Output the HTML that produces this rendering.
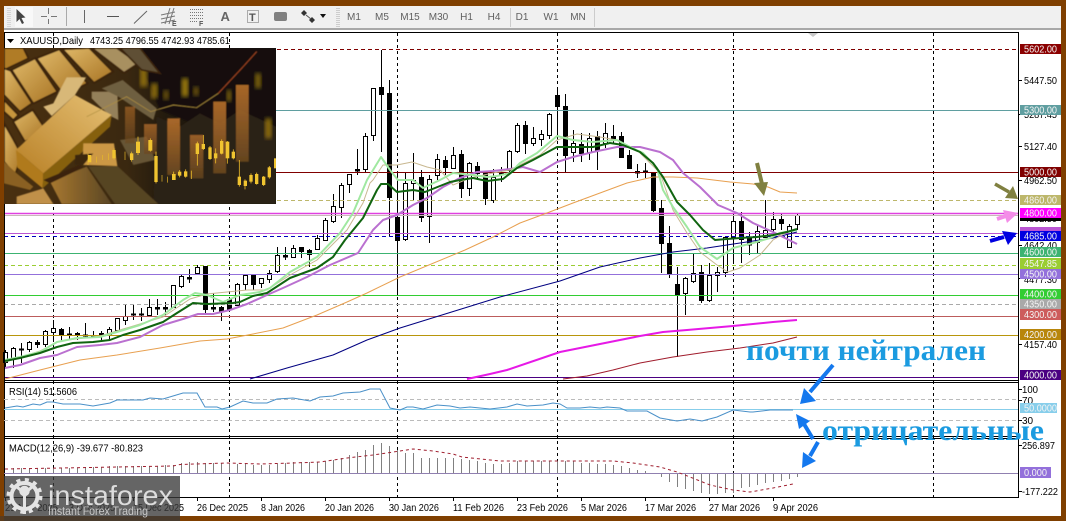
<!DOCTYPE html>
<html><head><meta charset="utf-8"><title>XAUUSD,Daily</title>
<style>
html,body{margin:0;padding:0;background:#7f3f00;}
svg{display:block;position:absolute;left:0;top:0;}
text{font-family:"Liberation Sans",sans-serif;}
</style></head><body>
<svg width="1066" height="521" viewBox="0 0 1066 521" xmlns="http://www.w3.org/2000/svg">
<defs>
<clipPath id="ic"><rect x="12" y="24" width="816" height="468"/></clipPath>
<linearGradient id="bg" x1="0" x2="1" y1="0" y2="0"><stop offset="0" stop-color="#4a3010"/><stop offset=".45" stop-color="#3a2810"/><stop offset=".6" stop-color="#221a0e"/><stop offset="1" stop-color="#120e08"/></linearGradient>
<linearGradient id="g1" x1="0" x2="1" y1="0" y2="1"><stop offset="0" stop-color="#dfb868"/><stop offset="1" stop-color="#a87424"/></linearGradient>
<linearGradient id="g2" x1="0" x2="1" y1="1" y2="0"><stop offset="0" stop-color="#b88026"/><stop offset="1" stop-color="#e6c074"/></linearGradient>
<linearGradient id="g3" x1="0" x2="1" y1="0" y2="0"><stop offset="0" stop-color="#a87830"/><stop offset="1" stop-color="#5a4624"/></linearGradient>
<linearGradient id="or" x1="0" x2="0" y1="0" y2="1"><stop offset="0" stop-color="#b8702c"/><stop offset="1" stop-color="#6a4820"/></linearGradient>
<filter id="b1"><feGaussianBlur stdDeviation="1.5"/></filter>
<filter id="b2"><feGaussianBlur stdDeviation="6"/></filter>
</defs>
<!-- frame -->
<rect width="1066" height="521" fill="#7f3f00"/>
<rect x="4" y="6" width="1057" height="24" fill="#f0f0f0"/>
<rect x="4" y="28" width="1057" height="2" fill="#a8a8a8"/>
<rect x="4" y="30" width="1057" height="486" fill="#fff"/>
<rect x="4.5" y="32.5" width="1014" height="465" fill="#fff" stroke="#000"/>
<!-- toolbar icons -->
<g>
<rect x="15" y="7" width="18" height="20" fill="#f8f8f8"/>
<path d="M8 8v19M10 8v19" stroke="#bbb" stroke-dasharray="1 1"/>
<path d="M16.5 9l0 13 3-3 2.5 5 2-1-2.5-5 4-.5z" fill="#444"/>
<path d="M48.5 8v6M48.5 19v5M41 16.5h6M51 16.5h6" stroke="#777"/>
<path d="M66.5 7v19" stroke="#aaa"/>
<path d="M84.5 10v13" stroke="#666"/>
<path d="M107 16.5h12" stroke="#555"/>
<path d="M134 23.5l13-12.5" stroke="#666"/>
<path d="M161 15l14-3M161 19l14-3M161 23l14-3M165 24l5-16M169 24l5-16" stroke="#777" fill="none"/>
<text x="172" y="26" font-size="7" font-weight="bold" fill="#555">E</text>
<path d="M190 9.500h13M190 12.500h13M190 15.500h13M190 18.500h13M190 21.500h7" stroke="#777" stroke-dasharray="1 1"/>
<text x="199" y="26" font-size="7" font-weight="bold" fill="#555">F</text>
<text x="220.500" y="21" font-size="13" font-weight="bold" fill="#666">A</text>
<rect x="247.500" y="10.500" width="11" height="12" fill="none" stroke="#666" stroke-dasharray="1 1"/>
<text x="249" y="21" font-size="11" font-weight="bold" fill="#555">T</text>
<rect x="274" y="12" width="13" height="9" rx="2" fill="#808080"/>
<path d="M304 10l3 3-3 3-3-3zM312 17l3 3-3 3-3-3z" fill="#333"/><path d="M306 15l5 4" stroke="#555"/>
<path d="M320 14h6l-3 4z" fill="#111"/>
<path d="M337 8v19M339 8v19" stroke="#aaa" stroke-dasharray="1 1"/>
<g font-size="10" fill="#606060" text-anchor="middle">
<text x="354" y="20">M1</text><text x="382" y="20">M5</text><text x="410" y="20">M15</text><text x="438.500" y="20">M30</text><text x="466.500" y="20">H1</text><text x="494" y="20">H4</text><text x="522" y="20">D1</text><text x="551" y="20">W1</text><text x="578" y="20">MN</text>
</g>
<path d="M510.500 8v19M594.500 8v19" stroke="#ccc"/>
</g>
<!-- grid verticals -->
<path d="M53.500 33V497M229.500 33V497M397.500 33V497M557.500 33V497M733.500 33V497M933.500 33V497" stroke="#000" stroke-dasharray="3 3" fill="none"/>
<path d="M808 33h10l-5 4z" fill="#c8c8c8"/>
<!-- candles -->
<path stroke="#000" fill="none" d="M5.500 350V368M13.500 347V368M21.500 343V363M29.500 341V352M37.500 340V348M45.500 330V347M53.500 320V342M61.500 328V342M69.500 327V340M77.500 332V340M85.500 323V338M93.500 331V338M101.500 331V340M109.500 327V340M117.500 318V330M125.500 304V325M133.500 304V320M141.500 308V321M149.500 299V315M157.500 299V315M165.500 302V315M173.500 285V308M181.500 275V288M189.500 269V283M197.500 265V273M205.500 266V313M213.500 293V312M221.500 306V321M229.500 297V310M237.500 283V306M245.500 275V290M253.500 275V290M261.500 278V288M269.500 270V283M277.500 247V273M285.500 247V260M293.500 245V257M301.500 247V258M309.500 249V267M317.500 235V250M325.500 218V241M333.500 194V223M341.500 183V218M349.500 174V193M357.500 149V175M365.500 133V172M373.500 88V141M381.500 50V152M389.500 80V237M397.500 172V295M405.500 173V241M413.500 153V200M421.500 170V222M429.500 175V243M437.500 154V180M445.500 156V175M453.500 147V168M461.500 150V198M469.500 162V196M477.500 162V180M485.500 172V205M493.500 169V203M501.500 167V182M509.500 150V173M517.500 123V153M525.500 121V154M533.500 127V146M541.500 130V146M549.500 113V139M557.500 87V140M565.500 94V173M573.500 130V162M581.500 133V162M589.500 133V160M597.500 131V170M605.500 123V148M613.500 125V143M621.500 132V157M629.500 150V169M637.500 164V178M645.500 163V178M653.500 172V212M661.500 200V273M669.500 226V278M677.500 267V357M685.500 277V315M693.500 254V283M701.500 265V303M709.500 263V302M717.500 267V292M725.500 237V277M733.500 213V263M741.500 212V263M749.500 232V255M757.500 225V253M765.500 200V238M773.500 212V235M781.500 214V230M789.500 224V248M797.500 213V230"/>
<path stroke="#000" fill="#fff" d="M11.500 348.500h4V358.500h-4zM27.500 342.500h4V349.500h-4zM43.500 331.500h4V344.500h-4zM51.500 328.500h4V332.500h-4zM107.500 329.500h4V334.500h-4zM115.500 318.500h4V330.500h-4zM123.500 316.500h4V320.500h-4zM147.500 307.500h4V315.500h-4zM171.500 285.500h4V307.500h-4zM179.500 276.500h4V286.500h-4zM195.500 267.500h4V273.500h-4zM235.500 284.500h4V305.500h-4zM243.500 275.500h4V284.500h-4zM259.500 278.500h4V283.500h-4zM267.500 273.500h4V279.500h-4zM275.500 255.500h4V271.500h-4zM291.500 248.500h4V257.500h-4zM315.500 238.500h4V249.500h-4zM323.500 220.500h4V240.500h-4zM331.500 206.500h4V221.500h-4zM339.500 185.500h4V207.500h-4zM347.500 174.500h4V184.500h-4zM363.500 136.500h4V169.500h-4zM371.500 88.500h4V135.500h-4zM403.500 183.500h4V239.500h-4zM411.500 180.500h4V183.500h-4zM427.500 179.500h4V216.500h-4zM435.500 159.500h4V175.500h-4zM451.500 155.500h4V168.500h-4zM467.500 163.500h4V188.500h-4zM491.500 177.500h4V200.500h-4zM507.500 151.500h4V170.500h-4zM515.500 125.500h4V151.500h-4zM531.500 138.500h4V143.500h-4zM539.500 134.500h4V139.500h-4zM547.500 114.500h4V135.500h-4zM571.500 143.500h4V152.500h-4zM587.500 138.500h4V152.500h-4zM603.500 133.500h4V143.500h-4zM683.500 278.500h4V293.500h-4zM691.500 273.500h4V281.500h-4zM707.500 275.500h4V300.500h-4zM715.500 272.500h4V275.500h-4zM723.500 237.500h4V272.500h-4zM731.500 221.500h4V237.500h-4zM755.500 231.500h4V242.500h-4zM763.500 230.500h4V237.500h-4zM771.500 219.500h4V229.500h-4zM787.500 226.500h4V247.500h-4zM795.500 215.500h4V224.500h-4z"/>
<path stroke="#000" fill="#000" d="M19.500 349h4v1h-4zM35.500 342.500h4V344.500h-4zM59.500 329.500h4V335.500h-4zM67.500 334h4v1h-4zM75.500 333.500h4V335.500h-4zM83.500 335h4v1h-4zM91.500 335.500h4V337h-4zM99.500 333.500h4V336h-4zM131.500 314h4v1h-4zM139.500 314h4v1h-4zM155.500 307.500h4V309h-4zM163.500 307.500h4V309h-4zM187.500 277.500h4V279h-4zM203.500 266.500h4V309.500h-4zM211.500 307.500h4V309h-4zM219.500 307.500h4V311.500h-4zM227.500 299.500h4V309.500h-4zM251.500 275.500h4V284.500h-4zM283.500 255.500h4V257h-4zM299.500 247.500h4V251.500h-4zM307.500 250.500h4V254.500h-4zM355.500 169.500h4V171h-4zM379.500 87.500h4V94.500h-4zM387.500 93.500h4V197.500h-4zM395.500 217.500h4V240.500h-4zM419.500 177.500h4V217.500h-4zM443.500 160.500h4V167.500h-4zM459.500 154.500h4V188.500h-4zM475.500 166.500h4V173.500h-4zM483.500 173.500h4V198.500h-4zM499.500 173.500h4V175h-4zM523.500 125.500h4V143.500h-4zM555.500 95.500h4V106.500h-4zM563.500 106.500h4V155.500h-4zM579.500 144.500h4V153.500h-4zM595.500 136.500h4V150.500h-4zM611.500 136.500h4V140.500h-4zM619.500 136.500h4V157.500h-4zM627.500 155.500h4V168.500h-4zM635.500 171.500h4V173h-4zM643.500 171h4v1h-4zM651.500 172.500h4V210.500h-4zM659.500 208.500h4V243.500h-4zM667.500 243.500h4V274.500h-4zM675.500 284.500h4V294.500h-4zM699.500 272.500h4V300.500h-4zM739.500 221.500h4V239.500h-4zM747.500 237.500h4V245h-4zM779.500 219.500h4V223.500h-4z"/>
<path stroke="#000" fill="#fff" d="M3.500 352.500h4V362.500h-4z"/>
<!-- horizontal lines -->
<g fill="none">
<path d="M4 49.500H1018" stroke="#800000" stroke-dasharray="4 3"/>
<path d="M4 110.500H1018" stroke="#5f9ea0"/>
<path d="M4 172.500H1018" stroke="#800000"/>
<path d="M4 200.500H1018" stroke="#bdb76b" stroke-dasharray="4 3"/>
<path d="M4 213.500H1018" stroke="#e040e0" stroke-width="1.500"/>
<path d="M4 215.500H1018" stroke="#c8b8b8"/>
<path d="M4 233.500H1018" stroke="#ba55d3"/>
<path d="M4 236.500H1018" stroke="#0000c0" stroke-dasharray="4 3"/>
<path d="M4 253.500H1018" stroke="#3cb371"/>
<path d="M4 265.500H1018" stroke="#9acd32" stroke-dasharray="4 3"/>
<path d="M4 274.500H1018" stroke="#9370db"/>
<path d="M4 295.500H1018" stroke="#32cd32"/>
<path d="M4 304.500H1018" stroke="#a9a9a9" stroke-dasharray="4 3"/>
<path d="M4 316.500H1018" stroke="#bc5c5c"/>
<path d="M4 335.500H1018" stroke="#b8960b"/>
<path d="M4 377.500H1018" stroke="#4b0082"/>
</g>
<!-- MAs -->
<g fill="none" stroke-linejoin="round">
<polyline stroke="#e8a050" stroke-width="1" points="5,379 40,370 80,360 117,355 160,348 200,341 227,339 253,334 283,328 317,315 347,302 367,293 400,277 465,250 493,237 520,223 547,213 573,203 600,193 627,183 640,180 653,177 673,177 697,178 730,182 753,184 768,187 780,192 797,193"/>
<polyline stroke="#000080" stroke-width="1" points="250,379 287,368 333,355 367,340 400,328 500,297 560,281 600,267 640,258 673,252 707,248 740,243 773,238 797,232"/>
<polyline stroke="#e619e6" stroke-width="2" points="467,379 490,374 507,370 560,352 620,340 640,336 663,332 687,330 733,326 773,322 797,320"/>
<polyline stroke="#a01c2c" stroke-width="1" points="563,379 587,376 613,370 640,363 673,357 707,352 740,348 773,343 797,337"/>
<polyline stroke="#ba70d0" stroke-width="2" points="5,368 20,365 40,358 57,355 77,347 100,345 117,343 140,337 163,325 183,319 198,314 213,314 230,310 247,304 267,295 283,288 307,277 330,265 358,253 373,230 383,220 397,215 413,205 427,198 443,187 460,178 477,172 493,171 510,169 523,167 540,172 557,162 573,157 593,152 617,147 640,147 660,152 673,160 683,173 700,187 718,205 737,213 753,223 773,232 797,244"/>
<polyline stroke="#c8b890" stroke-width="1" points="5,362 40,351 60,341 100,336 163,317 190,299 207,294 247,290 267,290 290,275 317,260 347,230 363,203 370,183 373,180 383,165 397,165 412,162 427,167 440,170 453,185 470,178 493,173 510,170 520,165 540,155 557,140 577,134 600,137 617,140 637,150 660,173 673,210 687,233 700,252 717,265 728,272 740,268 760,255 773,240 787,232"/>
<polyline stroke="#a0e8a0" stroke-width="2" points="5,360 20,357 40,352 57,342 77,338 100,337 117,332 140,325 163,315 183,300 195,293 207,295 223,302 240,295 260,292 270,288 290,272 317,257 340,233 353,213 367,180 381,157 390,170 398,180 413,180 423,188 440,180 453,173 473,175 487,177 497,176 510,173 520,163 537,153 557,136 573,140 593,142 617,140 630,147 643,153 657,168 663,190 673,207 687,227 700,247 717,259 733,248 753,243 770,238 780,233 797,230"/>
<polyline stroke="#106410" stroke-width="2" points="5,361 20,358 40,353 57,347 73,343 93,342 110,340 123,335 140,330 163,322 177,313 193,303 207,304 233,303 240,302 253,296 267,293 290,278 317,268 333,257 345,240 363,218 377,190 381,184 388,184 397,192 413,190 425,192 450,182 460,180 473,178 487,181 503,179 517,168 533,160 557,147 573,147 593,147 610,143 623,145 640,152 653,163 663,177 677,202 690,215 703,230 715,240 727,239 740,238 757,237 773,235 787,232 797,229"/>
</g>
<!-- panel borders -->
<path d="M4 380.500H1019M4 382.500H1019M4 436.500H1019M4 438.500H1019" stroke="#000"/>
<path d="M4.500 32V497M1018.500 32V497" stroke="#000"/>
<!-- RSI -->
<path d="M4 399.500H1018M4 420.500H1018" stroke="#bbb" stroke-dasharray="4 3"/>
<path d="M4 409.500H1018" stroke="#87ceeb"/>
<polyline fill="none" stroke="#4a90c8" stroke-width="1" points="5,408 17,406 23,407 33,404 40,405 47,402 53,402 63,404 80,404 93,406 110,403 117,400 143,400 150,398 163,399 173,396 183,393 197,393 205,407 217,407 222,409 230,407 243,401 253,403 267,403 277,399 293,398 310,401 320,397 333,396 343,393 360,392 370,389 380,389 390,408 400,410 407,407 413,407 423,409 437,405 450,406 460,408 470,407 490,409 507,407 517,404 527,406 543,405 553,403 560,404 567,408 580,408 590,407 600,408 607,407 620,408 627,411 647,411 660,418 677,421 690,419 702,421 717,417 733,410 750,412 753,412 770,410 793,410"/>
<!-- MACD -->
<path fill="none" stroke="#808080" d="M13.500 473V468M21.500 473V468M29.500 473V468M37.500 473V468M45.500 473V468M53.500 473V468M61.500 473V468M69.500 473V468M77.500 473V468M85.500 473V467M93.500 473V467M101.500 473V467M109.500 473V466M117.500 473V466M125.500 473V466M133.500 473V466M141.500 473V466M149.500 473V466M157.500 473V466M165.500 473V465M173.500 473V465M181.500 473V463M189.500 473V462M197.500 473V462M205.500 473V463M213.500 473V463M221.500 473V463M229.500 473V463M237.500 473V464M245.500 473V464M253.500 473V465M261.500 473V465M269.500 473V465M277.500 473V464M285.500 473V463M293.500 473V462M301.500 473V462M309.500 473V462M317.500 473V462M325.500 473V461M333.500 473V460M341.500 473V458M349.500 473V455M357.500 473V452M365.500 473V450M373.500 473V445M381.500 473V443M389.500 473V446M397.500 473V450M405.500 473V453M413.500 473V453M421.500 473V458M429.500 473V458M437.500 473V458M445.500 473V458M453.500 473V458M461.500 473V459M469.500 473V460M477.500 473V461M485.500 473V463M493.500 473V464M501.500 473V464M509.500 473V463M517.500 473V461M525.500 473V461M533.500 473V461M541.500 473V461M549.500 473V461M557.500 473V461M565.500 473V461M573.500 473V461M581.500 473V463M589.500 473V463M597.500 473V464M605.500 473V464M613.500 473V465M621.500 473V466M629.500 473V468M637.500 473V470M645.500 473V471M661.500 473V477M669.500 473V482M677.500 473V487M685.500 473V489M693.500 473V491M701.500 473V493M709.500 473V494M717.500 473V494M725.500 473V493M733.500 473V493M741.500 473V488M749.500 473V487M757.500 473V485M765.500 473V483M773.500 473V482M781.500 473V481M789.500 473V479M797.500 473V477"/>
<path d="M4 473.500H1018" stroke="#9080b0"/>
<polyline fill="none" stroke="#a02030" stroke-dasharray="3 3" points="5,469 173,466 180,464.500 227,463 260,464 293,463 320,462 347,458 373,455 400,451 413,449 433,451 453,454 462,457 500,461 550,461 613,461 633,463 660,467 677,472 690,477 710,485 733,490 750,492 773,488 793,484"/>
<!-- picture -->
<g transform="translate(0 40) scale(.33333)" clip-path="url(#ic)">
<rect x="12" y="24" width="816" height="468" fill="url(#bg)"/>
<g filter="url(#b1)">
<polygon points="400,24 828,24 828,300 600,260 480,210" fill="#14100a"/>
<polygon points="470,230 540,260 600,220 660,250 720,210 828,260 828,492 460,492" fill="#2c2216"/>
<rect x="420" y="80" width="22" height="60" fill="#8a6a10" filter="url(#b2)"/>
<rect x="545" y="115" width="20" height="55" fill="#9a7a10" filter="url(#b2)"/>
<rect x="453" y="130" width="20" height="45" fill="#8a6a10" filter="url(#b2)"/>
<rect x="490" y="150" width="16" height="30" fill="#6a5010" filter="url(#b2)"/>
<rect x="580" y="140" width="16" height="28" fill="#6a5010" filter="url(#b2)"/>
<rect x="765" y="100" width="18" height="45" fill="#7a6010" filter="url(#b2)"/>
<rect x="795" y="235" width="20" height="60" fill="#8a6a10" filter="url(#b2)"/>
<rect x="680" y="150" width="14" height="35" fill="#7a6010" filter="url(#b2)"/>
<!-- gold tiles -->
<g stroke="#3a2408" stroke-width="5">
<polygon points="12,24 70,24 85,55 12,90" fill="#b07c28"/>
<polygon points="35,90 105,55 172,155 100,190" fill="url(#g1)"/>
<polygon points="110,55 178,28 262,130 192,165" fill="url(#g1)"/>
<polygon points="188,28 268,24 338,95 282,128" fill="url(#g1)"/>
<polygon points="276,24 350,24 415,70 372,98" fill="#a89060"/>
<polygon points="360,24 420,24 480,100 425,90" fill="#5e5036"/>
<polygon points="12,85 32,92 96,190 60,215 12,165" fill="url(#g1)"/>
<polygon points="12,180 55,225 40,240 12,215" fill="#c8963e"/>
<polygon points="40,245 98,210 138,270 75,305" fill="url(#g1)"/>
<polygon points="12,250 38,295 65,345 45,405 12,365" fill="url(#g1)"/>
</g>
<polygon points="130,200 160,190 175,160 200,112 258,112 225,165 155,228" fill="#d8b878"/>
<polygon points="275,155 352,155 355,240 335,230 300,200 275,175" fill="#94805a"/>
<polygon points="305,145 368,120 470,205 460,240 355,170" fill="#6e5e40"/>
<polygon points="12,365 50,400 100,440 90,450 12,430" fill="#8a6020"/>
<polygon points="48,330 225,165 335,225 130,400" fill="url(#g2)"/>
<polygon points="48,330 130,400 128,445 52,382" fill="#b07a1a"/>
<polygon points="130,400 335,225 330,260 128,445" fill="#86600f"/>
<polygon points="250,310 342,310 352,378 248,375" fill="#cc9844"/>
<polygon points="150,425 260,380 335,492 185,492" fill="url(#g3)"/>
<polygon points="265,380 352,378 475,492 345,492" fill="#564424"/>
<polygon points="360,300 440,290 465,360 400,375" fill="#665434"/>
<polygon points="50,470 130,445 160,492 50,492" fill="#c09048"/>
<polygon points="225,345 280,340 250,375 225,375" fill="#3a2810"/>
<polygon points="130,420 240,375 250,382 150,430" fill="#3a2208"/>
<!-- orange bars -->
<rect x="375" y="200" width="30" height="110" fill="url(#or)" opacity=".6"/>
<rect x="432" y="252" width="38" height="90" fill="url(#or)" opacity=".75"/>
<rect x="502" y="235" width="38" height="170" fill="url(#or)" opacity=".9"/>
<rect x="570" y="285" width="40" height="130" fill="url(#or)" opacity=".75"/>
<rect x="640" y="185" width="38" height="215" fill="url(#or)" opacity=".9"/>
<rect x="708" y="135" width="38" height="230" fill="url(#or)" opacity=".9"/>
<polyline points="260,230 380,170 452,215 520,195 590,203 655,160 725,85 770,35" fill="none" stroke="#b09040" stroke-width="2"/>
<polyline points="655,160 725,85 770,35" fill="none" stroke="#a04020" stroke-width="2.500"/>
</g>
<g fill="#f0c430" stroke="#e8b828" stroke-width="2.500">
<path d="M414 290v55M451 295v40M468 335v95M521 395v25M539 390v22M557 388v25M574 392v25M592 305v72M610 285v45M630 318v42M647 325v45M665 298v45M682 303v68M700 328v30M718 360v80M735 418v30M753 400v30M770 398v36M791 408v30M808 378v38"/>
<path d="M486 405v20M503 410v18M264 340v35M290 350v18M308 345v15M325 340v20M342 325v35M375 335v25M395 335v30" stroke-width="2"/>
</g>
<g fill="#f0c430">
<rect x="408" y="305" width="12" height="34"/><rect x="445" y="300" width="12" height="32"/><rect x="463" y="348" width="10" height="78"/>
<rect x="516" y="402" width="11" height="18"/><rect x="534" y="395" width="10" height="12"/><rect x="552" y="394" width="10" height="16"/>
<rect x="587" y="310" width="10" height="32"/><rect x="605" y="312" width="10" height="15"/><rect x="625" y="322" width="10" height="35"/>
<rect x="642" y="340" width="10" height="15"/><rect x="660" y="303" width="10" height="38"/><rect x="677" y="305" width="11" height="50"/><rect x="695" y="335" width="10" height="20"/>
<rect x="713" y="410" width="10" height="25"/><rect x="731" y="422" width="10" height="16"/><rect x="748" y="405" width="10" height="20"/><rect x="765" y="402" width="10" height="30"/>
<rect x="786" y="410" width="10" height="25"/><rect x="803" y="382" width="10" height="30"/><rect x="822" y="355" width="6" height="30"/>
<rect x="264" y="345" width="10" height="22"/><rect x="337" y="330" width="10" height="25"/><rect x="390" y="340" width="10" height="20"/>
</g>
</g>
<!-- header -->
<path d="M7 39h7l-3.500 4z" fill="#000"/>
<text x="20" y="44" font-size="10.500" fill="#000" textLength="63" lengthAdjust="spacingAndGlyphs">XAUUSD,Daily</text>
<text x="90" y="44" font-size="10.500" fill="#000" textLength="140" lengthAdjust="spacingAndGlyphs">4743.25 4796.55 4742.93 4785.61</text>
<text x="9" y="395" font-size="10.500" fill="#000" textLength="68" lengthAdjust="spacingAndGlyphs">RSI(14) 51.5606</text>
<text x="9" y="451.500" font-size="10.500" fill="#000" textLength="134" lengthAdjust="spacingAndGlyphs">MACD(12,26,9) -39.677 -80.823</text>
<!-- right scale -->
<path d="M1019 80.500h3M1019 114.500h3M1019 146.500h3M1019 180.500h3M1019 245.500h3M1019 278.500h3M1019 344.500h3M1019 389.500h3M1019 400.500h3M1019 420.500h3M1019 445.500h3M1019 491.500h3" stroke="#000"/>
<g font-size="10" fill="#000">
<text x="1024" y="84" textLength="33" lengthAdjust="spacingAndGlyphs">5447.50</text>
<text x="1024" y="118" textLength="33" lengthAdjust="spacingAndGlyphs">5287.45</text>
<text x="1024" y="150" textLength="33" lengthAdjust="spacingAndGlyphs">5127.40</text>
<text x="1024" y="184" textLength="33" lengthAdjust="spacingAndGlyphs">4962.50</text>
<text x="1024" y="222" textLength="33" lengthAdjust="spacingAndGlyphs">4802.50</text>
<text x="1024" y="249" textLength="33" lengthAdjust="spacingAndGlyphs">4642.40</text>
<text x="1024" y="283" textLength="33" lengthAdjust="spacingAndGlyphs">4477.30</text>
<text x="1024" y="348" textLength="33" lengthAdjust="spacingAndGlyphs">4157.40</text>
<text x="1022" y="393" textLength="16" lengthAdjust="spacingAndGlyphs">100</text>
<text x="1022" y="404">70</text>
<text x="1022" y="424">30</text>
<text x="1022" y="449" textLength="33" lengthAdjust="spacingAndGlyphs">256.897</text>
<text x="1022" y="495" textLength="36" lengthAdjust="spacingAndGlyphs">-177.222</text>
</g>
<rect x="1020" y="218" width="41" height="3" fill="#000"/>
<rect x="1020" y="227" width="41" height="4" fill="#ba55d3"/>
<g>
<rect x="1020" y="44" width="41" height="10" fill="#8b0000"/>
<rect x="1020" y="105" width="41" height="10" fill="#5f9ea0"/>
<rect x="1020" y="167" width="41" height="10" fill="#800000"/>
<rect x="1020" y="195" width="41" height="10" fill="#bdb76b"/>
<rect x="1020" y="208" width="41" height="10" fill="#ff00ff"/>
<rect x="1020" y="231" width="41" height="10" fill="#0000e0"/>
<rect x="1020" y="247" width="41" height="10" fill="#3cb371"/>
<rect x="1020" y="258" width="41" height="11" fill="#9acd32"/>
<rect x="1020" y="269" width="41" height="10" fill="#9370db"/>
<rect x="1020" y="289" width="41" height="10" fill="#32cd32"/>
<rect x="1020" y="299" width="41" height="10" fill="#a9a9a9"/>
<rect x="1020" y="309" width="41" height="11" fill="#cd5c5c"/>
<rect x="1020" y="329" width="41" height="11" fill="#b8860b"/>
<rect x="1020" y="370" width="41" height="10" fill="#4b0082"/>
<rect x="1020" y="403" width="37" height="10" fill="#87ceeb"/>
<rect x="1020" y="467" width="31" height="11" fill="#9370db"/>
</g>
<g font-size="10" fill="#f4f4f4">
<text x="1024" y="52.500" textLength="33" lengthAdjust="spacingAndGlyphs">5602.00</text>
<text x="1024" y="113.500" textLength="33" lengthAdjust="spacingAndGlyphs">5300.00</text>
<text x="1024" y="175.500" textLength="33" lengthAdjust="spacingAndGlyphs">5000.00</text>
<text x="1024" y="203.500" textLength="33" lengthAdjust="spacingAndGlyphs">4860.00</text>
<text x="1024" y="216.500" textLength="33" lengthAdjust="spacingAndGlyphs">4800.00</text>
<text x="1024" y="239.500" textLength="33" lengthAdjust="spacingAndGlyphs">4685.00</text>
<text x="1024" y="255.500" textLength="33" lengthAdjust="spacingAndGlyphs">4600.00</text>
<text x="1024" y="267" textLength="33" lengthAdjust="spacingAndGlyphs">4547.85</text>
<text x="1024" y="277.500" textLength="33" lengthAdjust="spacingAndGlyphs">4500.00</text>
<text x="1024" y="297.500" textLength="33" lengthAdjust="spacingAndGlyphs">4400.00</text>
<text x="1024" y="307.500" textLength="33" lengthAdjust="spacingAndGlyphs">4350.00</text>
<text x="1024" y="318" textLength="33" lengthAdjust="spacingAndGlyphs">4300.00</text>
<text x="1024" y="338" textLength="33" lengthAdjust="spacingAndGlyphs">4200.00</text>
<text x="1024" y="378.500" textLength="33" lengthAdjust="spacingAndGlyphs">4000.00</text>
<text x="1024" y="411.500" textLength="33" lengthAdjust="spacingAndGlyphs">50.0000</text>
<text x="1024" y="476" textLength="23" lengthAdjust="spacingAndGlyphs">0.000</text>
</g>
<!-- dates -->
<path d="M5.500 497v4M69.500 497v4M133.500 497v4M197.500 497v4M261.500 497v4M325.500 497v4M389.500 497v4M453.500 497v4M517.500 497v4M581.500 497v4M645.500 497v4M709.500 497v4M773.500 497v4" stroke="#000"/>
<g font-size="10" fill="#000">
<text x="5" y="511" textLength="53" lengthAdjust="spacingAndGlyphs">21 Nov 2025</text>
<text x="69" y="511" textLength="46" lengthAdjust="spacingAndGlyphs">3 Dec 2025</text>
<text x="133" y="511" textLength="51" lengthAdjust="spacingAndGlyphs">15 Dec 2025</text>
<text x="197" y="511" textLength="51" lengthAdjust="spacingAndGlyphs">26 Dec 2025</text>
<text x="261" y="511" textLength="44" lengthAdjust="spacingAndGlyphs">8 Jan 2026</text>
<text x="325" y="511" textLength="49" lengthAdjust="spacingAndGlyphs">20 Jan 2026</text>
<text x="389" y="511" textLength="50" lengthAdjust="spacingAndGlyphs">30 Jan 2026</text>
<text x="453" y="511" textLength="51" lengthAdjust="spacingAndGlyphs">11 Feb 2026</text>
<text x="517" y="511" textLength="51" lengthAdjust="spacingAndGlyphs">23 Feb 2026</text>
<text x="581" y="511" textLength="46" lengthAdjust="spacingAndGlyphs">5 Mar 2026</text>
<text x="645" y="511" textLength="51" lengthAdjust="spacingAndGlyphs">17 Mar 2026</text>
<text x="709" y="511" textLength="51" lengthAdjust="spacingAndGlyphs">27 Mar 2026</text>
<text x="773" y="511" textLength="45" lengthAdjust="spacingAndGlyphs">9 Apr 2026</text>
</g>
<!-- annotation text -->
<text x="746" y="360" style="font-family:'Liberation Serif',serif" font-size="30" font-weight="bold" fill="#1b9be0" textLength="240" lengthAdjust="spacingAndGlyphs">почти нейтрален</text>
<text x="822" y="440" style="font-family:'Liberation Serif',serif" font-size="30" font-weight="bold" fill="#1b9be0" textLength="222" lengthAdjust="spacingAndGlyphs">отрицательные</text>
<!-- arrows -->
<g>
<path d="M833 365L810 392M804 424L813 439M810 456L818 442" stroke="#1478ee" stroke-width="4" fill="none"/>
<polygon points="800,404 816,401 804,388" fill="#1478ee"/>
<polygon points="796,414 810,421 799,429" fill="#1478ee"/>
<polygon points="802,468 816,461 803,452" fill="#1478ee"/>
<path d="M757 163L762 184" stroke="#808040" stroke-width="4"/>
<polygon points="754,183 768,182 764,196" fill="#808040"/>
<path d="M995 184L1009 192" stroke="#808040" stroke-width="3.500"/>
<polygon points="1018,199 1005,198 1013,186" fill="#808040"/>
<path d="M997 219L1006 216" stroke="#f48ce8" stroke-width="4"/>
<polygon points="1018,213 1003,210 1007,223" fill="#f48ce8"/>
<path d="M990 241L1004 237" stroke="#0000e0" stroke-width="4"/>
<polygon points="1017,233 1002,231 1008,245" fill="#0000e0"/>
</g>
<!-- logo -->
<rect x="4" y="476" width="176" height="45" fill="#3a3a3a" fill-opacity=".78"/>
<rect x="0" y="516" width="4" height="5" fill="#3a3a3a" fill-opacity=".5"/>
<g fill="none" stroke="#e4e4e4">
<circle cx="24.500" cy="496" r="13" stroke-width="4"/>
<circle cx="24.500" cy="496" r="16" stroke-width="4" stroke-dasharray="4 4.400"/>
<circle cx="24.500" cy="491" r="4" stroke-width="2.500" fill="#e4e4e4"/>
<path d="M24.500 491v23M17 487l7 6M32 487l-7 6" stroke-width="3"/>
</g>
<text x="48" y="505" font-size="28" fill="#dcdcdc" textLength="125" lengthAdjust="spacingAndGlyphs">instaforex</text>
<text x="48" y="515" font-size="12" fill="#c8c8c8" textLength="100" lengthAdjust="spacingAndGlyphs">Instant Forex Trading</text>
</svg>
</body></html>
